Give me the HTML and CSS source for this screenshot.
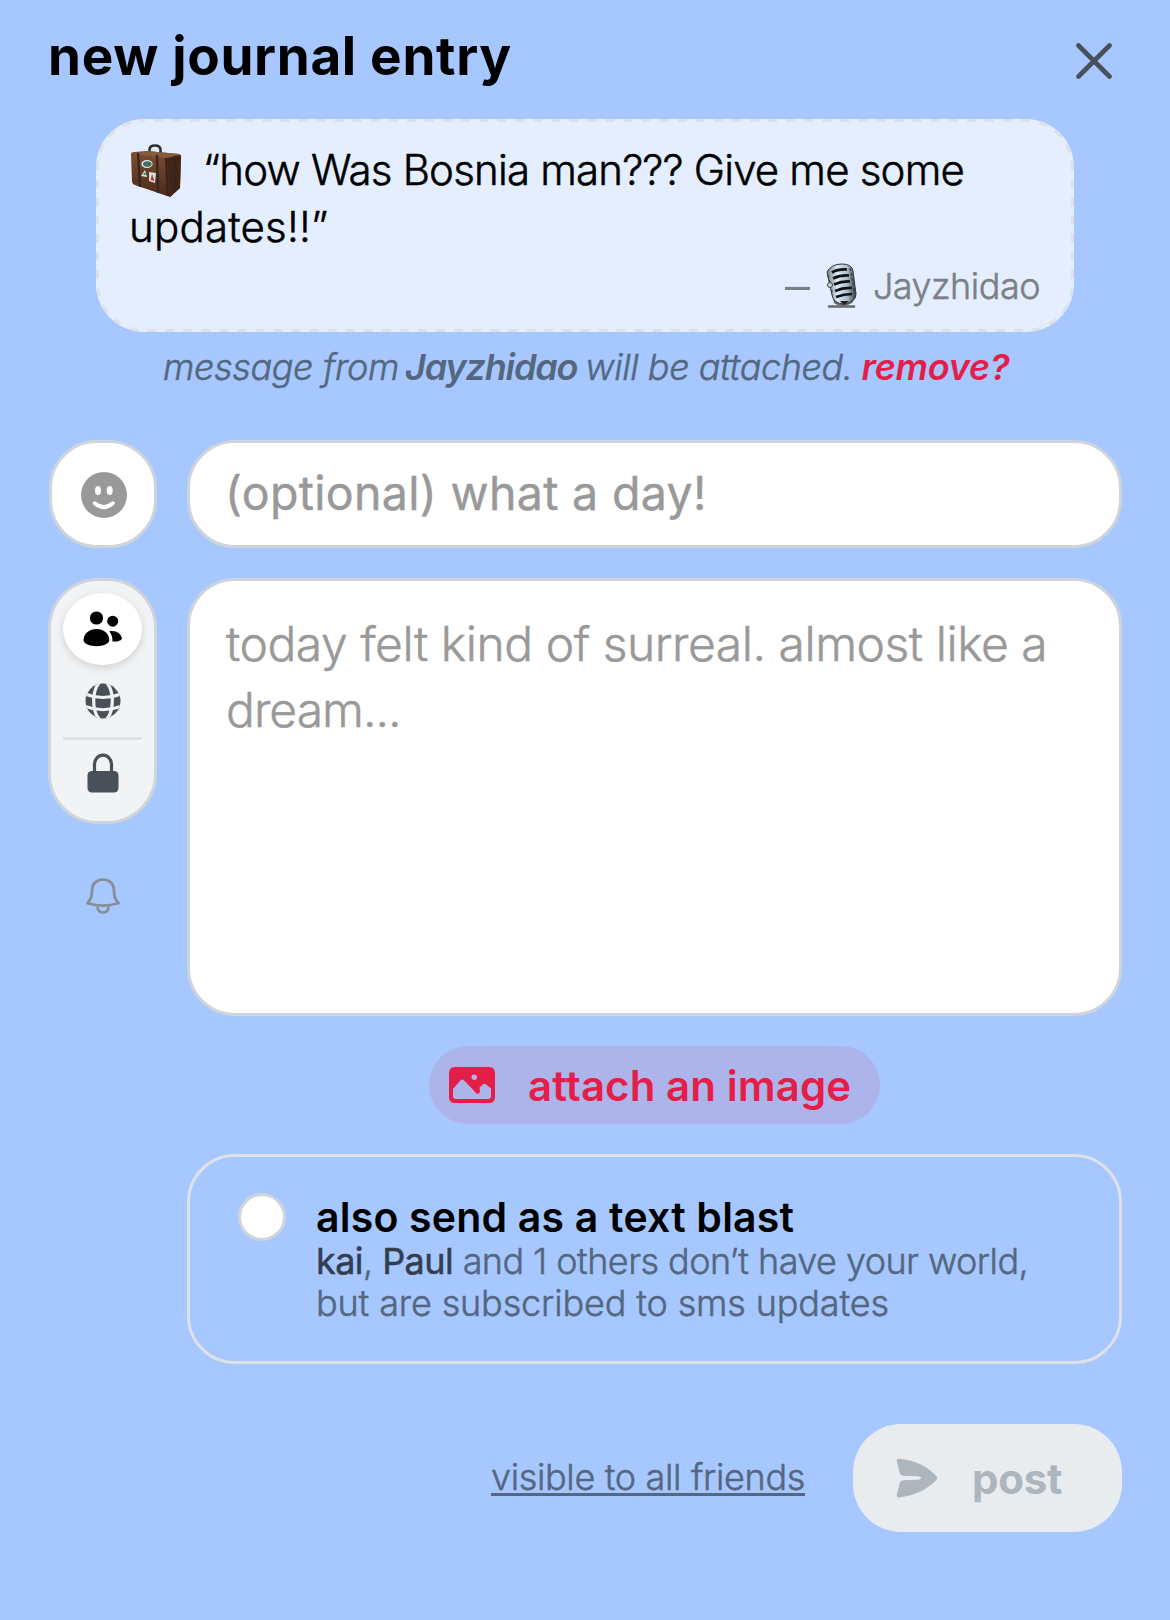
FILE: index.html
```html
<!DOCTYPE html>
<html lang="en">
<head>
<meta charset="utf-8">
<title>new journal entry</title>
<link rel="stylesheet" href="styles.css">
</head>
<body>
<main class="sheet">
  <header class="header">
    <h1 class="title">new journal entry</h1>
    <button class="close" aria-label="close">
      <svg width="36" height="36" viewBox="0 0 36 36"><path d="M2.5 2.5 33.5 33.5M33.5 2.5 2.5 33.5" fill="none" stroke="#495057" stroke-width="4.6" stroke-linecap="round"/></svg>
    </button>
  </header>

  <section class="quote">
    <svg class="quote-border" viewBox="0 0 978 213"><rect x="1.5" y="1.5" width="975" height="210" rx="46.5" fill="none" stroke="#dee0e3" stroke-width="3" stroke-dasharray="9 9.06" stroke-dashoffset="8"/></svg>
    <div class="quote-line">
      <svg class="suitcase" width="52" height="54" viewBox="0 0 52 54">
        <defs><linearGradient id="leather" x1="0" y1="0" x2="0" y2="1"><stop offset="0" stop-color="#7d4d33"/><stop offset="1" stop-color="#4a2a1a"/></linearGradient></defs>
        <path d="M19.500 10V6q0-4.500 5.500-4.500T30.500 6v6" fill="none" stroke="#302c2b" stroke-width="2.600"/>
        <path d="M1 10Q1 8 4 8L17 7 49 10Q51 10.500 51 13L50 44 40 53 5 41Q2 40 2 37Z" fill="url(#leather)"/>
        <path d="M37 14 51 11 50 44 40 53Z" fill="#422516"/>
        <path d="M1 10 17 7 49 10 37 14Z" fill="#855a3d"/>
        <path d="M8 9 10 43M27 11 28 49M36 14 38 52M45 12V48" stroke="#38231b" stroke-width="2.200"/>
        <ellipse cx="17" cy="20" rx="5.600" ry="4" fill="#e6edda"/><ellipse cx="17.300" cy="20" rx="4.300" ry="2.800" fill="#346d91"/><path d="m14 21 3-2 4 2-3 2Z" fill="#4a7543"/>
        <path d="m11 32 4-6 2 7Z" fill="#dce9dd"/><path d="m13 31 2-3 1 3Z" fill="#258b72"/>
        <path d="m19 28 7 1-1 10-6-2Z" fill="#d7dfe6"/><path d="m20.500 36 1.500-6 2.500 7Z" fill="#cf3238"/>
      </svg>
      <span class="quote-first">“how Was Bosnia man??? Give me some</span>
    </div>
    <div class="quote-line quote-second">updates!!”</div>
    <div class="byline">
      <span class="byline-dash">–</span>
      <svg class="mic" width="32" height="46" viewBox="0 0 32 46">
        <defs><linearGradient id="chrome"><stop offset="0" stop-color="#777c82"/><stop offset=".35" stop-color="#dcebf7"/><stop offset=".7" stop-color="#a9bdcd"/><stop offset="1" stop-color="#34383d"/></linearGradient></defs>
        <path d="M5 28 8 40Q16 46 26 40L30 34" fill="#63676b"/>
        <path d="M1 9Q5 1 16 1 26 1 27 8L30 31Q30 39 18 41 8 41 6 32Z" fill="url(#chrome)" stroke="#34383c" stroke-width="1"/>
        <path d="M6 9.500Q12 6 21 6.500M7 15.500Q14 12 23 12.500M8 21.500Q16 18 24 18.500M9 28Q17 24.500 26 25M10 34Q18 31 26 31" fill="none" stroke="#101114" stroke-width="2.700"/>
        <path d="M2 12 7 32M24 5 29 31" fill="none" stroke="#383c42" stroke-width="1.300" stroke-dasharray="3 2"/>
        <circle cx="4" cy="22" r="2.500" fill="#c7d1d7" stroke="#444" stroke-width="1"/>
        <path d="M3 43.500H28" stroke="#68686b" stroke-width="2.500" stroke-linecap="round"/><path d="m14 38 4 4 5-4" fill="#222"/>
      </svg>
      <span class="byline-name">Jayzhidao</span>
    </div>
  </section>

  <p class="notice"><span class="notice-from">message from</span><strong>Jayzhidao</strong><span class="notice-end">will be attached.</span><a class="remove">remove?</a></p>

  <form class="form">
    <button type="button" class="mood" aria-label="mood">
      <svg width="46" height="46" viewBox="0 0 46 46"><circle cx="23" cy="23" r="23" fill="#999"/><ellipse cx="17" cy="18.500" rx="3" ry="4.500" fill="#fff"/><ellipse cx="28.700" cy="18.500" rx="3" ry="4.500" fill="#fff"/><path d="M13.800 31.300Q22.800 39 31.800 31.300" fill="none" stroke="#fff" stroke-width="4" stroke-linecap="round"/></svg>
    </button>
    <div class="field subject">(optional) what a day!</div>

    <aside class="side">
      <div class="visibility">
        <div class="option active">
          <svg width="40" height="36" viewBox="0 0 40 36"><circle cx="13.500" cy="7" r="6.600"/><circle cx="29.700" cy="10.200" r="5.500"/><path d="M.5 29C1 22 6.500 18 13.500 18S26 22 26.300 29C26.500 32.500 20 35.200 13.500 35.200S.2 32.500.5 29Z"/><path d="M26.300 20.400C32.500 19 38.200 22.500 39 27.500 38.200 29.700 34.500 30.800 29.500 30.600 29.600 26.500 28.600 23 26.300 20.400Z"/></svg>
        </div>
        <div class="option globe">
          <svg width="36" height="36" viewBox="0 0 36 36"><defs><clipPath id="disc"><circle cx="18" cy="18" r="17.500"/></clipPath></defs><g clip-path="url(#disc)"><rect width="36" height="36" fill="#495057"/><g fill="none" stroke="#f1f3f5" stroke-width="3.200"><ellipse cx="18" cy="18" rx="9.300" ry="19.800"/><path d="M-1 10.500Q18 18.500 37 10.500M-1 23Q18 30.500 37 23"/></g></g></svg>
        </div>
        <div class="option lock">
          <svg width="32" height="40" viewBox="0 0 32 40"><path d="M7.500 20V11.200a8.500 9 0 0 1 17 0V20" fill="none" stroke="#495057" stroke-width="3.200"/><rect x=".5" y="18" width="31" height="21.500" rx="4.500" fill="#495057"/></svg>
        </div>
      </div>
      <svg class="bell" width="34" height="36" viewBox="0 0 34 36"><g fill="none" stroke="#868e96" stroke-width="2.700" stroke-linejoin="round"><path d="M17 1.500C10.500 1.500 6 6 6 12.200 6 18.500 5 21 1.500 25.200Q17 30 32.500 25.200C29 21 28 18.500 28 12.200 28 6 23.500 1.500 17 1.500Z"/><path d="M11.500 28.500C11.500 32.500 14 34.500 17 34.500S22.500 32.500 22.500 28.500"/></g></svg>
    </aside>
    <div class="field entry"><span class="entry-first">today felt kind of surreal. almost like a</span><br><span class="entry-second">dream...</span></div>

    <button type="button" class="attach">
      <svg width="46" height="36" viewBox="0 0 46 36"><path fill-rule="evenodd" d="M6 0H40Q46 0 46 6V30Q46 36 40 36H6Q0 36 0 30V6Q0 0 6 0ZM4 22V29Q4 32 7 32H39Q42 32 42 29V21.500L36.500 17Q35.500 16.300 34.500 17L30.500 20.500 31 24.500Q30.500 27.500 27.500 26.500L15 13.300Q13.300 11.500 11.500 13.300Z" fill="#e41e49"/><circle cx="25.300" cy="10.300" r="2.700" fill="#adb4ea"/></svg>
      <span>attach an image</span>
    </button>

    <label class="blast">
      <span class="radio"></span>
      <span class="blast-text">
        <span class="blast-title">also send as a text blast</span>
        <span class="blast-sub blast-names"><b>kai</b>, <b>Paul</b> and 1 others don’t have your world,</span>
        <span class="blast-sub">but are subscribed to sms updates</span>
      </span>
    </label>

    <footer class="actions">
      <a class="audience">visible to all friends</a>
      <button type="button" class="post">
        <svg width="42" height="40" viewBox="0 0 42 40"><path d="M3 .8C18 2 31 8 40.500 18.200Q42 20 40.500 21.800C31 32 18 38 3 39.400Q.5 39.500.8 37L3.500 25.500Q4.300 22.500 7 22.200L22 21.800Q25 21.500 25 20T22 18.200L7 17.800Q4.300 17.500 3.500 14.500L.8 3.200Q.5.700 3 .8Z" fill="#adb5bd"/></svg>
        <span>post</span>
      </button>
    </footer>
  </form>
</main>
</body>
</html>
```
FILE: styles.css
```css
* { box-sizing: border-box; }
body { margin: 0; background: #a6c7ff; font-family: Inter, "Liberation Sans", sans-serif; font-weight: 300; color: #000; }
button { border: 0; background: none; padding: 0; font: inherit; color: inherit; }
svg { display: block; flex: none; }
.sheet { height: 1620px; white-space: nowrap; overflow: hidden; }

.header { height: 119px; padding: 26px 58px 0 48px; display: flex; justify-content: space-between; align-items: flex-start; }
.title { margin: 0; font-size: 53px; line-height: 60px; font-weight: 700; letter-spacing: .68px; }
.close { margin-top: 17px; }

/* light text, thickened slightly */
.quote-line, .byline-name, .notice-from, .notice-end, .entry, .blast-sub, .audience { -webkit-text-stroke: .5px currentColor; }

.quote { position: relative; margin: 0 96px; height: 213px; padding: 22px 34px 0 33px; background: #e4eeff; border-radius: 48px; }
.quote-border { position: absolute; inset: 0; width: 978px; height: 213px; }
.quote-line { display: flex; align-items: center; font-size: 42px; line-height: 57px; }
.quote-first { letter-spacing: -.82px; }
.quote-second { letter-spacing: .2px; }
.suitcase { margin: 2px 21px 0 1px; height: 54px; }
.byline { margin-top: 4px; height: 54px; display: flex; align-items: center; justify-content: flex-end; font-size: 36px; line-height: 54px; color: #7b8086; }
.byline-dash { font-size: 50px; line-height: 50px; }
.mic { margin: 0 15px 0 16px; }
.byline-name { letter-spacing: -.5px; }

.notice { margin: 8px 0 46px; padding-left: 163px; display: flex; font-size: 36px; line-height: 54px; font-style: italic; color: #54677f; }
.notice strong { margin: 0 8px 0 6px; font-weight: 600; letter-spacing: -1.15px; }
.notice-from { letter-spacing: -.38px; }
.notice-end { letter-spacing: -.43px; }
.remove { margin-left: 9px; color: #e41e49; font-weight: 600; letter-spacing: -.2px; }

.form { display: grid; grid-template-columns: 109px 935px; gap: 30px; padding: 0 48px; }
.mood, .field { border: 3px solid #ced4da; border-radius: 48px; background: #fff; }
.mood { width: 108px; height: 108px; margin-left: 1px; display: flex; align-items: center; justify-content: center; }
.mood svg { margin: 1px 0 0 1px; }
.field { color: #999; font-size: 48px; }
.subject { height: 108px; padding: 0 35px; line-height: 101px; font-weight: 400; font-size: 46.5px; letter-spacing: .32px; -webkit-text-stroke: .4px currentColor; }
.entry { height: 438px; padding: 30px 36px; line-height: 66px; }
.entry-first { letter-spacing: -.48px; }
.entry-second { letter-spacing: -1px; }

.visibility { height: 246px; padding: 12px 12px 0; border: 3px solid #ced4da; border-radius: 50px; background: #f1f3f5; }
.option { height: 72px; display: flex; align-items: center; justify-content: center; }
.active { border-radius: 39px / 36px; background: #fff; box-shadow: 0 3px 9px rgba(0, 0, 0, .14); }
.globe { height: 75px; border-bottom: 3px solid #dee2e6; }
.lock { height: 65px; }
.bell { margin: 54px auto 0 38px; }

.attach, .blast, .actions { grid-column: 2; }
.attach { justify-self: center; width: 451px; height: 78px; padding-left: 20px; display: flex; align-items: center; gap: 33px; border-radius: 39px; background: #adb4ea; color: #e41e49; font-size: 42px; font-weight: 600; letter-spacing: .08px; }

.blast { height: 210px; padding: 36px 48px 0; display: flex; gap: 30px; border: 3px solid #dee2e6; border-radius: 48px; }
.radio { width: 48px; height: 48px; border: 3px solid #ced4da; border-radius: 50%; background: #fff; }
.blast-text { display: flex; flex-direction: column; align-items: flex-start; }
.blast-title { margin-bottom: -1px; font-size: 41px; line-height: 48px; font-weight: 600; letter-spacing: .2px; }
.blast-sub { font-size: 36px; line-height: 42px; letter-spacing: -.15px; color: #54677f; }
.blast-names { letter-spacing: -.57px; }
.blast-sub b { font-weight: 400; color: #323e4f; }

.actions { margin-top: 30px; display: flex; justify-content: flex-end; align-items: center; gap: 48px; }
.audience { margin-top: -3px; font-size: 36px; line-height: 54px; letter-spacing: -.34px; color: #54677f; text-decoration: underline; text-decoration-thickness: 3px; text-underline-offset: 3px; text-decoration-skip-ink: none; }
.post { width: 269px; height: 108px; padding-left: 43px; display: flex; align-items: center; gap: 34px; border-radius: 48px; background: #e9ecef; color: #adb5bd; font-size: 42px; font-weight: 700; letter-spacing: -.25px; }
```
